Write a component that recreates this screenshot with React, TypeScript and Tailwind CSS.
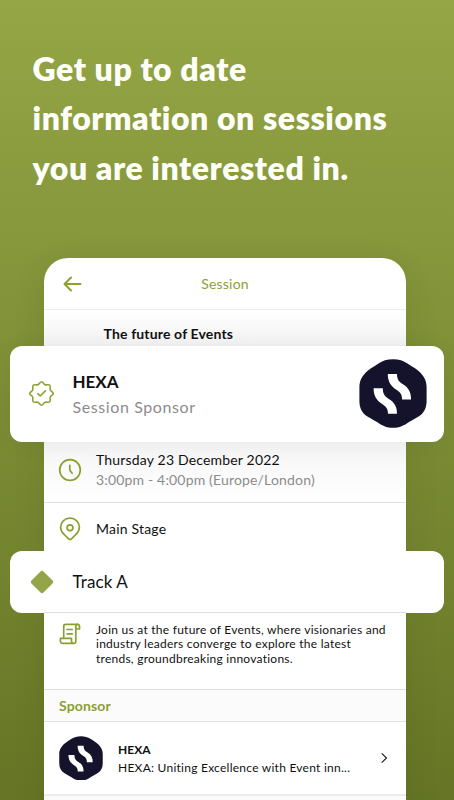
import type { ReactNode } from "react";

function HexaLogo({ size }: { size: number }) {
  return (
    <svg width={size} height={size * 1.015} viewBox="0 0 68 69" className="shrink-0">
      <path
        d="M34 0.200C40 0.200 44.500 1.700 48.500 4.400C51 6.100 53.500 7.500 56 9.300C63.500 14.300 67.600 20.500 67.600 28V42C67.600 49 65 53.800 60 57.300C56.500 59.600 53 61.200 50 63C45 66.500 40.500 68.800 34 68.800C27.500 68.800 23 66.500 18 63C15 61.200 11.500 59.600 8 57.300C3 53.800 0.400 49 0.400 42V28C0.400 20.500 4.500 14.300 12 9.300C14.500 7.500 17 6.100 19.500 4.400C23.500 1.700 28 0.200 34 0.200Z"
        fill="#14132b"
      />
      <path d="M28.800 15H38C38 20.500 40 23 44.300 25.500C49.800 29 52.100 33.500 52.100 40.600H43.100C43.100 36 41.800 33.500 37.800 31C31.300 27 28.800 22 28.800 15Z" fill="#fff" />
      <path d="M14.600 29.300H23.800C23.800 34.800 25.800 37.500 29.800 40C35.800 43.500 38 48 38 54.800H29C29 50.500 27.800 48 23.800 45.500C17.100 41.300 14.600 36.300 14.600 29.300Z" fill="#fff" />
    </svg>
  );
}

function BackIcon() {
  return (
    <svg width="20" height="18" viewBox="0 0 20 18" fill="none" stroke="#8ba032" strokeWidth="2" strokeLinecap="round" strokeLinejoin="round">
      <path d="M17.500 9H1.800M8 2.500L1.500 9L8 15.500" />
    </svg>
  );
}

function BadgeIcon() {
  return (
    <svg width="27" height="27" viewBox="0 0 27 27" fill="none" stroke="#8da234" strokeWidth="1.600" strokeLinecap="round" strokeLinejoin="round">
      <path d="M13.500 1.700C14.900 1.700 15.700 4.200 17.100 4.700C18.500 5.300 20.800 4.200 21.800 5.200C22.800 6.200 21.700 8.500 22.300 9.900C22.800 11.300 25.300 12.100 25.300 13.500C25.300 14.900 22.800 15.700 22.300 17.100C21.700 18.500 22.800 20.800 21.800 21.800C20.800 22.800 18.500 21.700 17.100 22.300C15.700 22.800 14.900 25.300 13.500 25.300C12.100 25.300 11.300 22.800 9.900 22.300C8.500 21.700 6.200 22.800 5.200 21.800C4.200 20.800 5.300 18.500 4.700 17.100C4.200 15.700 1.700 14.900 1.700 13.500C1.700 12.100 4.200 11.300 4.700 9.900C5.300 8.500 4.200 6.200 5.200 5.200C6.200 4.200 8.500 5.300 9.900 4.700C11.300 4.200 12.100 1.700 13.500 1.700Z" />
      <path d="M9.800 13.700L12.200 16L17.300 10.900" />
    </svg>
  );
}

function ClockIcon() {
  return (
    <svg width="24" height="24" viewBox="0 0 24 24" fill="none" stroke="#8ba032" strokeWidth="1.700" strokeLinecap="round" strokeLinejoin="round">
      <circle cx="12" cy="12" r="10.300" />
      <path d="M11.800 7.300V12.300L14.200 15.200" />
    </svg>
  );
}

function PinIcon() {
  return (
    <svg width="24" height="24" viewBox="0 0 24 24" fill="none" stroke="#8ba032" strokeWidth="1.700" strokeLinejoin="round">
      <path d="M12 1.200C17.400 1.200 21.400 5.100 21.400 10.200C21.400 13.300 19.900 15.600 17.700 17.700L13.400 21.800C12.500 22.700 11.500 22.700 10.600 21.800L6.300 17.700C4.100 15.600 2.600 13.300 2.600 10.200C2.600 5.100 6.600 1.200 12 1.200Z" />
      <circle cx="12" cy="10.800" r="2.900" />
    </svg>
  );
}

function ScrollIcon() {
  return (
    <svg width="22" height="22" viewBox="0 0 22 22" fill="none" stroke="#8ba032" strokeWidth="1.700" strokeLinecap="round" strokeLinejoin="round">
      <path d="M4.700 15.200V3.300C4.700 2.100 5.500 1.300 6.700 1.300H18.500C19.900 1.300 20.500 2.300 20.500 3.400V6H16.800V18C16.800 19.400 15.900 20.400 14.600 20.400H3.600C2.200 20.400 1.400 19.400 1.400 18V15.400H12.500V18C12.500 19.400 13.300 20.400 14.600 20.400" />
      <path d="M16.800 6V3.200C16.800 2.100 17.400 1.300 18.500 1.300M8 6.500H13.300M8 10.800H13.300" />
    </svg>
  );
}

function DetailRow({ icon, children, className }: { icon: ReactNode; children: ReactNode; className: string }) {
  return (
    <div className={`flex pl-[14px] ${className}`}>
      <div className="flex w-6 shrink-0 justify-center">{icon}</div>
      <div className="ml-[14px] whitespace-nowrap">{children}</div>
    </div>
  );
}

export default function App() {
  return (
    <main className="h-[800px] w-[454px] overflow-hidden bg-linear-to-b from-[#95a646] to-[#657525] font-['Lato',sans-serif] text-[#111]">
      <h1 className="h-[258px] pt-[44px] pl-[32.5px] text-[32px] leading-[49.4px] font-extrabold tracking-[0.6px] whitespace-nowrap text-[#fffffa]">
        Get up to date
        <br />
        information on sessions
        <br />
        you are interested in.
      </h1>
      <section className="ml-[44px] flex h-[560px] w-[362px] flex-col rounded-t-[24px] bg-white shadow-[0_8px_32px_rgba(40,50,10,0.1)]">
        <header className="grid h-[52px] shrink-0 grid-cols-[1fr_auto_1fr] items-center border-b border-[#ececec]">
          <div className="pl-[19px]">
            <BackIcon />
          </div>
          <span className="text-[14px] tracking-[0.2px] text-[#8ba032]">Session</span>
        </header>
        <div className="h-9 shrink-0 bg-linear-to-b from-white to-[#f2f2f2] pt-[14px] pl-[59.5px] text-[14px] leading-5 font-bold tracking-[0.15px]">
          The future of Events
        </div>
        <div className="z-10 -mr-[38px] -ml-[34px] flex h-[95.5px] shrink-0 items-center rounded-[12px] bg-white pr-[17.5px] pl-[18px] shadow-[0_2px_24px_rgba(0,0,0,0.05)]">
          <BadgeIcon />
          <div className="ml-[17.5px] flex-1">
            <div className="text-[17px] leading-[25px] font-bold">HEXA</div>
            <div className="text-[16px] leading-[25px] tracking-[0.6px] text-[#8c8c8c]">Session Sponsor</div>
          </div>
          <HexaLogo size={68} />
        </div>
        <DetailRow icon={<div className="pt-[7.5px]"><ClockIcon /></div>} className="h-[61.5px] shrink-0 border-b border-[#e2e2e2] bg-linear-to-b from-[#f5f5f5] to-white pt-[8.5px]">
          <div className="text-[14px] leading-5 tracking-[0.18px]">Thursday 23 December 2022</div>
          <div className="text-[14px] leading-5 tracking-[0.17px] text-[#8c8c8c]">3:00pm - 4:00pm (Europe/London)</div>
        </DetailRow>
        <DetailRow icon={<PinIcon />} className="h-[47.5px] shrink-0 items-center pt-[5px]">
          <div className="text-[14px] leading-5 tracking-[0.2px]">Main Stage</div>
        </DetailRow>
        <div className="-mr-[38px] -ml-[34px] flex h-[62.5px] shrink-0 items-center rounded-[12px] bg-white pl-[19.5px]">
          <svg width="24" height="24" viewBox="0 0 24 24">
            <rect x="3.500" y="3.500" width="17" height="17" rx="2.400" transform="rotate(45 12 12)" fill="#93a548" />
          </svg>
          <div className="ml-[19px] text-[17px] tracking-[0.1px]">Track A</div>
        </div>
        <DetailRow icon={<ScrollIcon />} className="-mt-px h-[78px] shrink-0 border-y border-[#dedede] pt-[9.5px]">
          <p className="text-[12px] leading-[14.500px] tracking-[0.25px]">
            Join us at the future of Events, where visionaries and
            <br />
            industry leaders converge to explore the latest
            <br />
            trends, groundbreaking innovations.
          </p>
        </DetailRow>
        <h2 className="flex h-8 shrink-0 items-center border-b border-[#e2e2e2] bg-[#fbfbfb] pl-[15px] text-[14px] font-bold tracking-[0.15px] text-[#8ba032]">
          Sponsor
        </h2>
        <div className="flex h-[74px] shrink-0 items-center border-b-2 border-[#ececec] pr-[18px] pl-[15px]">
          <HexaLogo size={44} />
          <div className="ml-[15px] flex-1 pt-px text-[12px] leading-[18px] whitespace-nowrap">
            <div className="font-bold">HEXA</div>
            <div className="tracking-[0.25px]">HEXA: Uniting Excellence with Event inn...</div>
          </div>
          <svg width="8" height="12" viewBox="0 0 8 12" fill="none" stroke="#222" strokeWidth="1.200">
            <path d="M1.700 1.400L6.500 6L1.700 10.600" />
          </svg>
        </div>
        <div className="flex-1 bg-[#fbfbfb]" />
      </section>
    </main>
  );
}
